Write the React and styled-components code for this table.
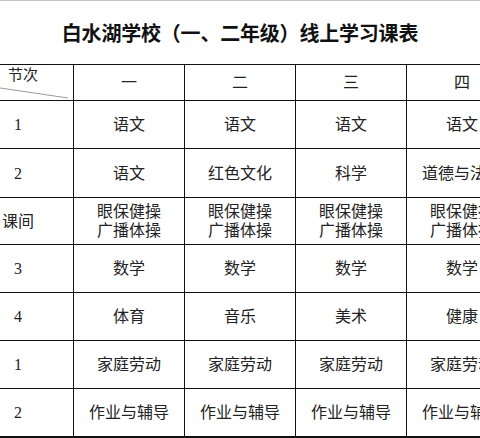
import React from "react";
import styled, { createGlobalStyle } from "styled-components";

const Global = createGlobalStyle`
  html, body { margin: 0; padding: 0; background: #fff; }
  body {
    width: 480px;
    height: 438px;
    overflow: hidden;
    font-family: "Liberation Serif", "Noto Sans CJK SC", serif;
    color: #222;
  }
`;

const Page = styled.div`
  width: 480px;
  height: 438px;
  display: flex;
  flex-direction: column;
  overflow: hidden;
  border-top: 1px solid #c4c4c4;
  box-sizing: border-box;
`;

const Title = styled.h1`
  margin: 0;
  height: 63px;
  display: flex;
  align-items: center;
  justify-content: center;
  font-family: "Noto Sans CJK SC", sans-serif;
  font-size: 20px;
  font-weight: 700;
  color: #111;
  letter-spacing: -0.2px;
`;

const Viewport = styled.div`
  width: 480px;
  overflow: hidden;
`;

const Grid = styled.div`
  margin-left: -37px;
  width: 555px;
  display: grid;
  grid-template-columns: repeat(5, 111px);
  grid-template-rows: 36px 48px 49px 47px 48px 48px 48px 49px;
  border-top: 1px solid #111;
`;

const Cell = styled.div`
  box-sizing: border-box;
  border-right: 1px solid #111;
  border-bottom: ${(p) => (p.$last ? "2px" : "1px")} solid #111;
  display: flex;
  flex-direction: column;
  align-items: center;
  justify-content: center;
  font-size: 16px;
  line-height: 19px;
  white-space: nowrap;
  overflow: hidden;
  position: relative;
`;

const CornerCell = styled(Cell)`
  align-items: flex-start;
  justify-content: flex-start;
`;

const CornerLabel = styled.span`
  font-family: "Noto Sans CJK SC", sans-serif;
  font-size: 15px;
  line-height: 18px;
  padding-left: 45px;
  padding-top: 0px;
`;

const Diagonal = styled.svg`
  position: absolute;
  left: 0;
  top: 0;
  width: 110px;
  height: 35px;
  pointer-events: none;
`;

const Line = styled.span`
  display: block;
`;

const days = ["一", "二", "三", "四"];

const rows = [
  ["1", "语文", "语文", "语文", "语文"],
  ["2", "语文", "红色文化", "科学", "道德与法治"],
  ["课间", "眼保健操\n广播体操", "眼保健操\n广播体操", "眼保健操\n广播体操", "眼保健操\n广播体操"],
  ["3", "数学", "数学", "数学", "数学"],
  ["4", "体育", "音乐", "美术", "健康"],
  ["1", "家庭劳动", "家庭劳动", "家庭劳动", "家庭劳动"],
  ["2", "作业与辅导", "作业与辅导", "作业与辅导", "作业与辅导"],
];

export default function App() {
  return (
    <>
      <Global />
      <Page>
        <Title>白水湖学校（一、二年级）线上学习课表</Title>
        <Viewport>
          <Grid>
            <CornerCell>
              <Diagonal viewBox="0 0 110 35">
                <line x1="0" y1="17.5" x2="105" y2="33" stroke="#9a9a9a" strokeWidth="1" />
              </Diagonal>
              <CornerLabel>节次</CornerLabel>
            </CornerCell>
            {days.map((d) => (
              <Cell key={d}>{d}</Cell>
            ))}
            {rows.map((r, ri) =>
              r.map((c, ci) => (
                <Cell key={ri + "-" + ci} $last={ri === rows.length - 1}>
                  {c.split("\n").map((l, li) => (
                    <Line key={li}>{l}</Line>
                  ))}
                </Cell>
              ))
            )}
          </Grid>
        </Viewport>
      </Page>
    </>
  );
}
